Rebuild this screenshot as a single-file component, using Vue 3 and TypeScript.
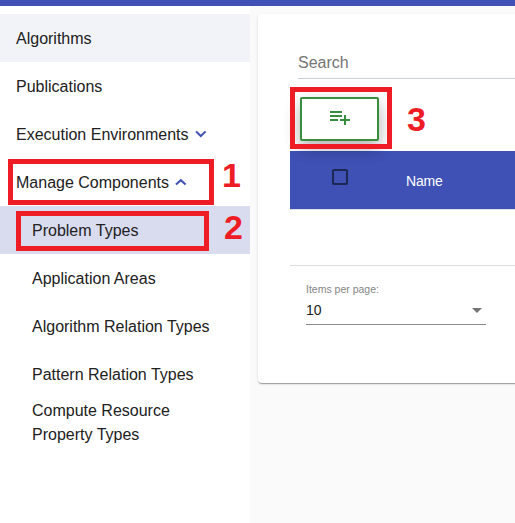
<script setup lang="ts">
import { ref } from 'vue'

interface NavItem {
  label: string
  state?: 'focused' | 'selected'
  chevron?: 'down' | 'up'
  child?: boolean
}

const items: NavItem[] = [
  { label: 'Algorithms', state: 'focused' },
  { label: 'Publications' },
  { label: 'Execution Environments', chevron: 'down' },
  { label: 'Manage Components', chevron: 'up' },
  { label: 'Problem Types', state: 'selected', child: true },
  { label: 'Application Areas', child: true },
  { label: 'Algorithm Relation Types', child: true },
  { label: 'Pattern Relation Types', child: true },
  { label: 'Compute Resource Property Types', child: true },
]

const pageSize = ref(10)
</script>

<template>
  <div class="page">
    <header class="topbar"></header>
    <div class="body">
      <nav class="sidebar">
        <a
          v-for="item in items"
          :key="item.label"
          class="nav-item"
          :class="[item.state, { child: item.child }]"
        >
          <span class="nav-label">{{ item.label }}</span>
          <svg v-if="item.chevron" class="chevron" viewBox="0 0 12 8" width="12" height="8">
            <path :d="item.chevron === 'down' ? 'M1 1.4 L5.8 6 L10.6 1.4' : 'M1 6.6 L5.8 2.2 L10.6 6.6'" />
          </svg>
        </a>
      </nav>
      <main class="content">
        <section class="card">
          <div class="search">Search</div>
          <div class="toolbar">
            <button class="add" type="button" aria-label="Add">
              <svg viewBox="0 0 24 24" width="24" height="24">
                <path d="M14 10H2v2h12v-2zm0-4H2v2h12V6zm4 8v-4h-2v4h-4v2h4v4h2v-4h4v-2h-4zM2 16h8v-2H2v2z" />
              </svg>
            </button>
          </div>
          <div class="table-head">
            <span class="checkbox"></span>
            <span class="column">Name</span>
          </div>
          <div class="table-row"></div>
          <div class="paginator">
            <div class="page-label">Items per page:</div>
            <div class="select">
              <span>{{ pageSize }}</span>
              <i class="arrow"></i>
            </div>
          </div>
        </section>
      </main>
    </div>
    <div class="mark mark-one"></div>
    <div class="mark mark-two"></div>
    <div class="mark mark-three"></div>
    <span class="number number-one">1</span>
    <span class="number number-two">2</span>
    <span class="number number-three">3</span>
  </div>
</template>

<style>
body {
  margin: 0;
  overflow: hidden;
}
</style>

<style scoped>
.page {
  position: relative;
  display: flex;
  flex-direction: column;
  width: 515px;
  height: 523px;
  overflow: hidden;
  background: #fafafa;
  color: #212121;
  font-family: "Liberation Sans", Arial, sans-serif;
}
.topbar {
  flex: none;
  height: 6px;
  background: #3f51b5;
}
.body {
  display: flex;
  flex: 1;
}
.sidebar {
  box-sizing: border-box;
  flex: none;
  width: 250px;
  padding-top: 8px;
  background: #fff;
}
.nav-item {
  box-sizing: border-box;
  display: flex;
  align-items: center;
  height: 48px;
  padding: 0 16px;
  font-size: 16px;
  line-height: 24px;
}
.nav-label {
  padding-top: 2px;
}
.child {
  padding: 0 32px;
}
.focused {
  background: #f2f3f9;
}
.selected {
  background: #d9dbef;
}
.chevron {
  margin-left: 6px;
  fill: none;
  stroke: #3f51b5;
  stroke-width: 2;
}
.content {
  flex: 1;
  min-width: 0;
  padding: 8px 0 0 8px;
}
.card {
  box-sizing: border-box;
  width: 300px;
  height: 369px;
  padding: 32px;
  border-radius: 4px;
  background: #fff;
  box-shadow: 0 2px 1px -1px rgba(0, 0, 0, 0.2), 0 1px 1px rgba(0, 0, 0, 0.14),
    0 1px 3px rgba(0, 0, 0, 0.12);
}
.search {
  box-sizing: border-box;
  height: 33px;
  margin-left: 8px;
  padding-top: 8px;
  border-bottom: 1px solid #c9d0d8;
  color: #757575;
  font-size: 16px;
  line-height: 18px;
}
.toolbar {
  box-sizing: border-box;
  height: 72px;
  padding: 18px 0 0 10px;
}
.add {
  position: relative;
  display: flex;
  box-sizing: border-box;
  align-items: center;
  justify-content: center;
  width: 79px;
  height: 44px;
  padding: 0 0 4px;
  border: 2px solid #388e3c;
  border-radius: 2px;
  background: #fff;
  box-shadow: 0 8px 16px rgba(0, 0, 0, 0.2), 0 6px 20px rgba(0, 0, 0, 0.12);
}
.add svg {
  fill: #388e3c;
}
.table-head {
  display: flex;
  height: 58px;
  border-bottom: 1px solid #dce0e4;
  background: #3f51b5;
  background-clip: padding-box;
}
.checkbox {
  box-sizing: border-box;
  width: 16px;
  height: 16px;
  margin: 18px 0 0 42px;
  border: 2px solid #1d2753;
  border-radius: 2px;
}
.column {
  margin: 22px 0 0 58px;
  color: #fff;
  font-size: 14px;
  letter-spacing: -0.2px;
  line-height: 16px;
}
.table-row {
  height: 55px;
  border-bottom: 1px solid #dedede;
}
.paginator {
  width: 180px;
  padding: 17px 0 0 16px;
}
.page-label {
  color: #858585;
  font-size: 10.5px;
  line-height: 13px;
}
.select {
  display: flex;
  box-sizing: border-box;
  align-items: center;
  justify-content: space-between;
  height: 29px;
  padding-right: 4px;
  border-bottom: 1px solid #8c8c8c;
  font-size: 14px;
}
.arrow {
  border: 5px solid transparent;
  border-top-color: #757575;
  border-bottom: 0;
}
.mark {
  position: absolute;
  box-sizing: border-box;
  border: 5px solid #ee1c24;
}
.mark-one {
  left: 8px;
  top: 159px;
  width: 206px;
  height: 46px;
}
.mark-two {
  left: 16px;
  top: 211px;
  width: 193px;
  height: 40px;
}
.mark-three {
  left: 290px;
  top: 87px;
  width: 102px;
  height: 62px;
}
.number {
  position: absolute;
  color: #ee1c24;
  font-size: 34px;
  font-weight: bold;
  line-height: 38px;
}
.number-one {
  left: 222px;
  top: 156px;
}
.number-two {
  left: 224px;
  top: 208px;
}
.number-three {
  left: 407px;
  top: 100px;
}
</style>
